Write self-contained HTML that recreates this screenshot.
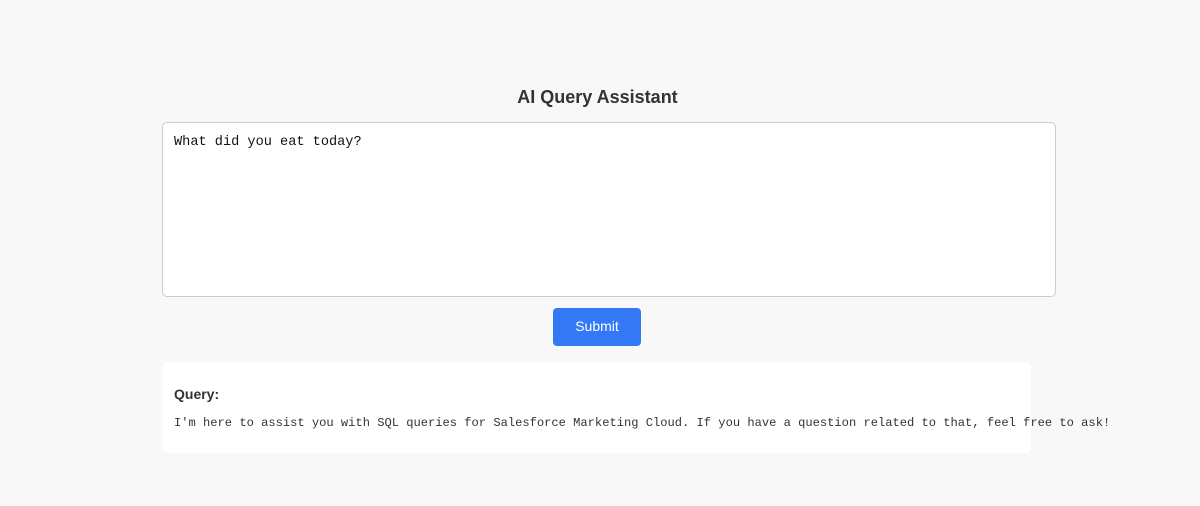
<!DOCTYPE html>
<html><head><style>
body{margin:0;background:#f8f8f8;font-family:"Liberation Sans",sans-serif;width:1200px;height:506px;position:relative;overflow:hidden}
h1{position:absolute;top:86px;left:0;width:1195px;text-align:center;margin:0;font-size:18px;font-weight:bold;color:#333;line-height:22px}
.ta{position:absolute;left:162px;top:122px;width:894px;height:175px;background:#fff;border:1px solid #ccc;border-radius:5px;box-sizing:border-box}
.ta span{position:absolute;left:11px;top:12px;font-family:"Liberation Mono",monospace;font-size:13.6px;color:#111}
.btn{position:absolute;left:553px;top:308px;width:88px;height:38px;background:#3478f6;border-radius:4px;color:#fff;font-size:14px;text-align:center;line-height:37px}
.res{position:absolute;left:162px;top:362px;width:869px;height:91px;background:#fff;border-radius:6px}
.q{position:absolute;left:12px;top:24px;font-weight:bold;font-size:14px;color:#333}
.o{position:absolute;left:12px;top:54px;font-family:"Liberation Mono",monospace;font-size:12.1px;color:#333;white-space:nowrap}
</style></head><body>
<h1>AI Query Assistant</h1>
<div class="ta"><span>What did you eat today?</span></div>
<div class="btn">Submit</div>
<div class="res"><div class="q">Query:</div><div class="o">I'm here to assist you with SQL queries for Salesforce Marketing Cloud. If you have a question related to that, feel free to ask!</div></div>
</body></html>
